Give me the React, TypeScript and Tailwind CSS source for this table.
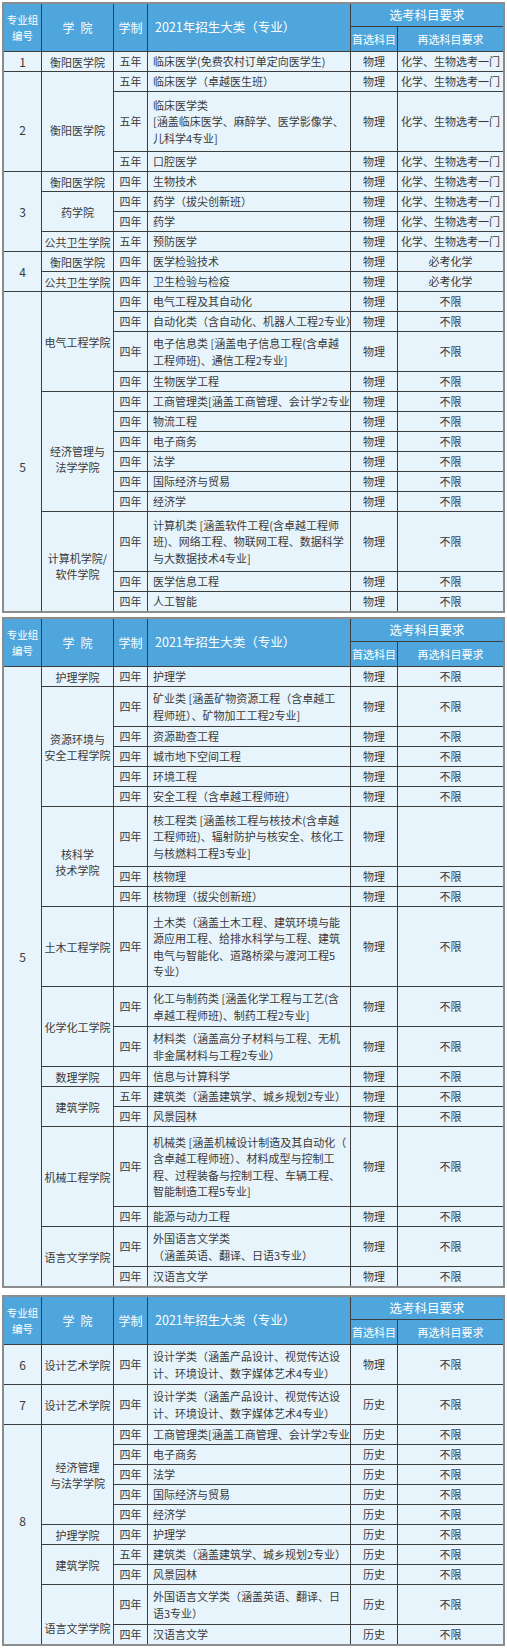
type Major = { y: string; m: string[]; f: string; s: string };
type College = { name: string[]; rows: Major[]; pad?: string };
type Group = { no: string; colleges: College[]; pad?: string };

const spanClass: Record<number, string> = {
  1: "row-span-1",
  2: "row-span-2",
  3: "row-span-3",
  4: "row-span-4",
  5: "row-span-5",
  6: "row-span-6",
  11: "row-span-11",
  16: "row-span-16",
  31: "row-span-31",
};

const CHEM = "化学、生物选考一门";

// shorthand: most rows are 四年 / 物理 / 不限
const r = (m: string | string[], y = "四年", f = "物理", s = "不限"): Major => ({
  y,
  m: Array.isArray(m) ? m : [m],
  f,
  s,
});
const h = (m: string | string[], y = "四年") => r(m, y, "历史", "不限");

const table1: Group[] = [
  {
    no: "1",
    colleges: [{ name: ["衡阳医学院"], rows: [r("临床医学(免费农村订单定向医学生)", "五年", "物理", CHEM)] }],
  },
  {
    no: "2",
    pad: "pt-[16px]",
    colleges: [
      {
        name: ["衡阳医学院"],
        pad: "pt-[16px]",
        rows: [
          r("临床医学（卓越医生班）", "五年", "物理", CHEM),
          r(["临床医学类", "[涵盖临床医学、麻醉学、医学影像学、", "儿科学4专业]"], "五年", "物理", CHEM),
          r("口腔医学", "五年", "物理", CHEM),
        ],
      },
    ],
  },
  {
    no: "3",
    colleges: [
      { name: ["衡阳医学院"], rows: [r("生物技术", "四年", "物理", CHEM)] },
      {
        name: ["药学院"],
        rows: [r("药学（拔尖创新班）", "四年", "物理", CHEM), r("药学", "四年", "物理", CHEM)],
      },
      { name: ["公共卫生学院"], rows: [r("预防医学", "五年", "物理", CHEM)] },
    ],
  },
  {
    no: "4",
    colleges: [
      { name: ["衡阳医学院"], rows: [r("医学检验技术", "四年", "物理", "必考化学")] },
      { name: ["公共卫生学院"], rows: [r("卫生检验与检疫", "四年", "物理", "必考化学")] },
    ],
  },
  {
    no: "5",
    pad: "pt-[30px]",
    colleges: [
      {
        name: ["电气工程学院"],
        rows: [
          r("电气工程及其自动化"),
          r("自动化类（含自动化、机器人工程2专业）"),
          r(["电子信息类 [涵盖电子信息工程(含卓越", "工程师班)、通信工程2专业]"]),
          r("生物医学工程"),
        ],
      },
      {
        name: ["经济管理与", "法学学院"],
        pad: "pt-[14px]",
        rows: [
          r("工商管理类[涵盖工商管理、会计学2专业]"),
          r("物流工程"),
          r("电子商务"),
          r("法学"),
          r("国际经济与贸易"),
          r("经济学"),
        ],
      },
      {
        name: ["计算机学院/", "软件学院"],
        pad: "pt-[8px]",
        rows: [
          r(["计算机类 [涵盖软件工程(含卓越工程师", "班)、网络工程、物联网工程、数据科学", "与大数据技术4专业]"]),
          r("医学信息工程"),
          r("人工智能"),
        ],
      },
    ],
  },
];

const table2: Group[] = [
  {
    no: "5",
    pad: "pb-[40px]",
    colleges: [
      { name: ["护理学院"], rows: [r("护理学")] },
      {
        name: ["资源环境与", "安全工程学院"],
        rows: [
          r(["矿业类 [涵盖矿物资源工程（含卓越工", "程师班）、矿物加工工程2专业]"]),
          r("资源勘查工程"),
          r("城市地下空间工程"),
          r("环境工程"),
          r("安全工程（含卓越工程师班）"),
        ],
      },
      {
        name: ["核科学", "技术学院"],
        pad: "pt-[10px]",
        rows: [
          r(["核工程类 [涵盖核工程与核技术(含卓越", "工程师班)、辐射防护与核安全、核化工", "与核燃料工程3专业]"], "四年", "物理", ""),
          r("核物理"),
          r("核物理（拔尖创新班）"),
        ],
      },
      {
        name: ["土木工程学院"],
        rows: [
          r([
            "土木类（涵盖土木工程、建筑环境与能",
            "源应用工程、给排水科学与工程、建筑",
            "电气与智能化、道路桥梁与渡河工程5",
            "专业）",
          ]),
        ],
      },
      {
        name: ["化学化工学院"],
        rows: [
          r(["化工与制药类 [涵盖化学工程与工艺(含", "卓越工程师班)、制药工程2专业]"]),
          r(["材料类（涵盖高分子材料与工程、无机", "非金属材料与工程2专业）"]),
        ],
      },
      { name: ["数理学院"], rows: [r("信息与计算科学")] },
      {
        name: ["建筑学院"],
        rows: [r("建筑类（涵盖建筑学、城乡规划2专业）", "五年"), r("风景园林")],
      },
      {
        name: ["机械工程学院"],
        rows: [
          r([
            "机械类 [涵盖机械设计制造及其自动化（",
            "含卓越工程师班）、材料成型与控制工",
            "程、过程装备与控制工程、车辆工程、",
            "智能制造工程5专业]",
          ]),
          r("能源与动力工程"),
        ],
      },
      {
        name: ["语言文学学院"],
        rows: [r(["外国语言文学类", "（涵盖英语、翻译、日语3专业）"]), r("汉语言文学")],
      },
    ],
  },
];

const design = ["设计学类（涵盖产品设计、视觉传达设", "计、环境设计、数字媒体艺术4专业）"];

const table3: Group[] = [
  { no: "6", colleges: [{ name: ["设计艺术学院"], rows: [r(design)] }] },
  { no: "7", colleges: [{ name: ["设计艺术学院"], rows: [h(design)] }] },
  {
    no: "8",
    pad: "pb-[28px]",
    colleges: [
      {
        name: ["经济管理", "与法学学院"],
        rows: [
          h("工商管理类[涵盖工商管理、会计学2专业]"),
          h("电子商务"),
          h("法学"),
          h("国际经济与贸易"),
          h("经济学"),
        ],
      },
      { name: ["护理学院"], rows: [h("护理学")] },
      {
        name: ["建筑学院"],
        rows: [h("建筑类（涵盖建筑学、城乡规划2专业）", "五年"), h("风景园林")],
      },
      {
        name: ["语言文学学院"],
        pad: "pt-[26px]",
        rows: [h(["外国语言文学类（涵盖英语、翻译、日", "语3专业）"]), h("汉语言文学")],
      },
    ],
  },
];

const head = "flex items-center justify-center bg-[#4ea6dd] text-white";
const body = "flex items-center justify-center bg-[#e7f4fc] text-[#3a3a3a] text-[11px]";

function DataTable({ groups }: { groups: Group[] }) {
  const cells: React.ReactNode[] = [];
  groups.forEach((g, gi) => {
    const gLines = g.colleges.reduce(
      (a, c) => a + c.rows.reduce((b, m) => b + m.m.length, 0),
      0
    );
    g.colleges.forEach((c, ci) => {
      const cLines = c.rows.reduce((b, m) => b + m.m.length, 0);
      c.rows.forEach((m, ri) => {
        const k = `${gi}-${ci}-${ri}`;
        const sp = spanClass[m.m.length];
        if (ci === 0 && ri === 0) {
          cells.push(
            <div key={k + "g"} className={`${body} ${spanClass[gLines]} text-[12px] ${g.pad ?? ""}`}>
              {g.no}
            </div>
          );
        }
        if (ri === 0) {
          cells.push(
            <div
              key={k + "c"}
              className={`${body} ${spanClass[cLines]} flex-col leading-[16px] whitespace-nowrap ${c.pad ?? ""}`}
            >
              {c.name.map((n) => (
                <span key={n}>{n}</span>
              ))}
            </div>
          );
        }
        cells.push(
          <div key={k + "y"} className={`${body} ${sp}`}>
            {m.y}
          </div>,
          <div
            key={k + "m"}
            className={`${body} ${sp} flex-col !items-start pl-[5px] leading-[16.5px] whitespace-nowrap`}
          >
            {m.m.map((line, li) => (
              <span key={li}>{line}</span>
            ))}
          </div>,
          <div key={k + "f"} className={`${body} ${sp}`}>
            {m.f}
          </div>,
          <div key={k + "s"} className={`${body} ${sp} whitespace-nowrap`}>
            {m.s}
          </div>
        );
      });
    });
  });

  return (
    <div className="grid grid-cols-[37px_71px_33px_202px_46px_1fr] grid-rows-[22px_24px] auto-rows-[19px] gap-px border-2 border-[#8c8c8c] bg-[#3d3d3d]">
      <div className={`${head} row-span-2 flex-col text-[10.5px] leading-[16px]`}>
        <span>专业组</span>
        <span>编号</span>
      </div>
      <div className={`${head} row-span-2 gap-[6px] text-[12px]`}>
        <span>学</span>
        <span>院</span>
      </div>
      <div className={`${head} row-span-2 text-[12px]`}>学制</div>
      <div className={`${head} row-span-2 !justify-start pl-[7px] text-[12.5px]`}>2021年招生大类（专业）</div>
      <div className={`${head} col-span-2 text-[12.5px]`}>选考科目要求</div>
      <div className={`${head} text-[11px]`}>首选科目</div>
      <div className={`${head} text-[11px]`}>再选科目要求</div>
      {cells}
    </div>
  );
}

export default function App() {
  return (
    <div className="flex w-[507px] flex-col bg-white px-[2px] pt-[2px] pb-[3px] font-['Noto_Sans_CJK_SC','Noto_Sans',sans-serif]">
      <DataTable groups={table1} />
      <div className="mt-[4px]">
        <DataTable groups={table2} />
      </div>
      <div className="mt-[7px]">
        <DataTable groups={table3} />
      </div>
    </div>
  );
}
